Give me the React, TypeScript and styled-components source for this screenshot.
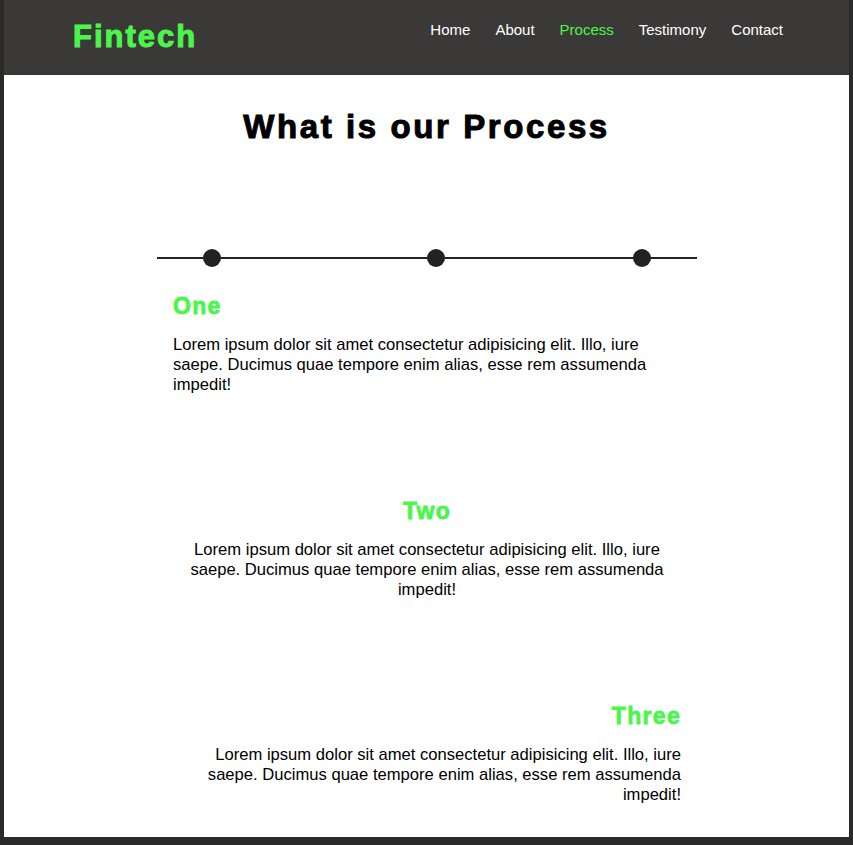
import React from "react";
import styled, { createGlobalStyle } from "styled-components";

const Global = createGlobalStyle`
  html, body { margin: 0; padding: 0; }
  body {
    background: #2a2a2a;
    font-family: "Liberation Sans", Arial, sans-serif;
    overflow: hidden;
  }
`;

const Frame = styled.div`
  margin: 0 4px;
  height: 837px;
  background: #ffffff;
  display: flex;
  flex-direction: column;
  overflow: hidden;
`;

const Header = styled.header`
  flex-shrink: 0;
  height: 75px;
  background: #3a3937;
  display: flex;
  justify-content: space-between;
  align-items: flex-start;
  padding: 0 66px 0 69px;
  box-sizing: border-box;
`;

const Logo = styled.div`
  color: #4cf54c;
  font-size: 31px;
  font-weight: 700;
  letter-spacing: 2px;
  -webkit-text-stroke: 1px #4cf54c;
  margin-top: 19px;
`;

const Nav = styled.nav`
  display: flex;
  gap: 25px;
  margin-top: 21px;
`;

const NavLink = styled.a<{ $active?: boolean }>`
  color: ${(p) => (p.$active ? "#4cf54c" : "#ffffff")};
  font-size: 15px;
  text-decoration: none;
`;

const Main = styled.main`
  flex: 1;
  display: flex;
  flex-direction: column;
  align-items: center;
`;

const Title = styled.h1`
  margin: 32px 0 0;
  font-size: 33px;
  font-weight: 700;
  letter-spacing: 2.6px;
  -webkit-text-stroke: 1px #000;
  color: #000;
  line-height: 40px;
`;

const Timeline = styled.div`
  margin-top: 110px;
  width: 540px;
  height: 2px;
  background: #222;
  position: relative;
  margin-left: 1px;
  flex-shrink: 0;
`;

const Dot = styled.span`
  position: absolute;
  top: -8px;
  width: 18px;
  height: 18px;
  margin-left: -9px;
  border-radius: 50%;
  background: #222;
`;

const Steps = styled.div`
  width: 508px;
  display: flex;
  flex-direction: column;
  margin-top: 34px;
  margin-left: 1px;
`;

const Step = styled.section<{ $align: "left" | "center" | "right" }>`
  height: 205px;
  flex-shrink: 0;
  text-align: ${(p) => p.$align};
`;

const StepTitle = styled.h2`
  margin: 0;
  color: #4cf54c;
  font-size: 23px;
  font-weight: 700;
  letter-spacing: 1.3px;
  -webkit-text-stroke: 0.8px #4cf54c;
  line-height: 26px;
`;

const StepText = styled.p`
  margin: 16px 0 0;
  font-size: 16.6px;
  line-height: 20px;
  color: #000;
`;

const lorem =
  "Lorem ipsum dolor sit amet consectetur adipisicing elit. Illo, iure saepe. Ducimus quae tempore enim alias, esse rem assumenda impedit!";

const steps: { title: string; align: "left" | "center" | "right" }[] = [
  { title: "One", align: "left" },
  { title: "Two", align: "center" },
  { title: "Three", align: "right" },
];

const dots = [55, 279, 485];

export default function App() {
  return (
    <>
      <Global />
      <Frame>
        <Header>
          <Logo>Fintech</Logo>
          <Nav>
            <NavLink href="#">Home</NavLink>
            <NavLink href="#">About</NavLink>
            <NavLink href="#" $active>
              Process
            </NavLink>
            <NavLink href="#">Testimony</NavLink>
            <NavLink href="#">Contact</NavLink>
          </Nav>
        </Header>
        <Main>
          <Title>What is our Process</Title>
          <Timeline>
            {dots.map((x) => (
              <Dot key={x} style={{ left: x }} />
            ))}
          </Timeline>
          <Steps>
            {steps.map((s) => (
              <Step key={s.title} $align={s.align}>
                <StepTitle>{s.title}</StepTitle>
                <StepText>{lorem}</StepText>
              </Step>
            ))}
          </Steps>
        </Main>
      </Frame>
    </>
  );
}
